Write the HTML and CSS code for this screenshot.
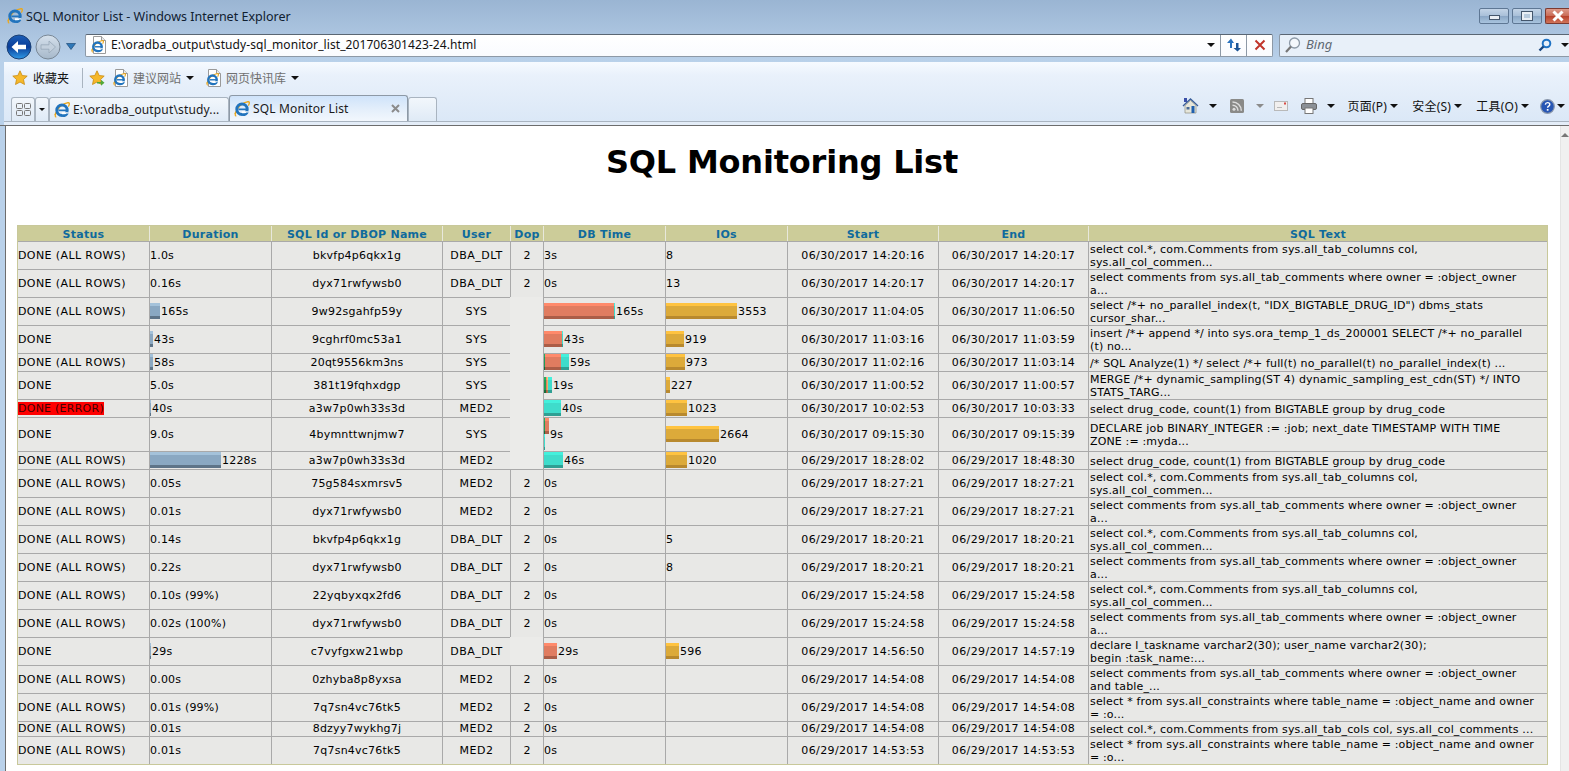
FILE: index.html
```html
<!DOCTYPE html>
<html lang="en">
<head>
    <meta charset="UTF-8">
    <title>SQL Monitor List - Windows Internet Explorer</title>
    <link rel="stylesheet" href="styles.css">
</head>
<body>
    <svg class="defs" width="0" height="0">
        <defs>
            <symbol id="ie" viewBox="0 0 16 16">
                <path d="M.9 13C3.500 6 9 1.400 14.400.6c1.500.4.9 2.600-.1 4" fill="none" stroke="#e9a820" stroke-width="1.400"/>
                <path d="M2.300 15.200c-1.700-.4-1.200-2.800.1-4.600" fill="none" stroke="#e9a820" stroke-width="1.300"/>
                <circle cx="8" cy="8.300" r="5.200" fill="none" stroke="#2274bd" stroke-width="3"/>
                <rect x="4.500" y="7.500" width="8" height="1.700" fill="#2274bd"/>
                <path d="M8 10.300h5.500L15 11l-1 1.200H8z" fill="#fff"/>
                <path d="M8.500 13.200c1.800 0 3-.5 3.800-1.700h2.400c-1.100 2.500-3.200 3.600-6 3.600z" fill="#2274bd"/>
            </symbol>
            <symbol id="page-ie" viewBox="0 0 16 18">
                <path d="M2.500.5h8l4 4v13h-12z" fill="#fff" stroke="#9a9a9a"/>
                <path d="M10.500.5v4h4" fill="#e8e8e8" stroke="#9a9a9a"/>
                <use href="#ie" x="0" y="4" width="13" height="13"/>
            </symbol>
            <symbol id="star" viewBox="0 0 16 16">
                <path d="M8 .8l2.200 4.700 5 .6-3.700 3.400 1 5-4.500-2.500-4.500 2.500 1-5L.8 6.100l5-.6z" fill="#f5b82a" stroke="#c98a12" stroke-width=".8"/>
            </symbol>
        </defs>
    </svg>

    <header class="chrome">
        <div class="title-bar">
            <svg class="ico-16"><use href="#ie"/></svg>
            <span class="title-text">SQL Monitor List - Windows Internet Explorer</span>
            <div class="win-btns">
                <span class="win-btn"><i class="glyph-min"></i></span>
                <span class="win-btn"><i class="glyph-max"></i></span>
                <span class="win-btn win-close">
                    <svg width="14" height="12" viewBox="0 0 14 12"><path d="M2.500 1.500l9 9M11.500 1.500l-9 9" stroke="#fff" stroke-width="3"/></svg>
                </span>
            </div>
        </div>

        <div class="nav-bar">
            <div class="nav-round">
                <svg width="26" height="26" viewBox="0 0 26 26">
                    <defs><linearGradient id="back" x1="0" y1="0" x2="0" y2="1"><stop offset="0" stop-color="#1c5fb8"/><stop offset=".5" stop-color="#0a3d98"/><stop offset="1" stop-color="#2f9be8"/></linearGradient></defs>
                    <circle cx="13" cy="13" r="12" fill="url(#back)" stroke="#1b3f73"/>
                    <path d="M5.500 13l6.500-6v3.800h8v4.400h-8V19z" fill="#fff"/>
                </svg>
                <svg class="nav-fwd" width="26" height="26" viewBox="0 0 26 26">
                    <defs><linearGradient id="fwd" x1="0" y1="0" x2="0" y2="1"><stop offset="0" stop-color="#d6e1ec"/><stop offset="1" stop-color="#a6b8ca"/></linearGradient></defs>
                    <circle cx="13" cy="13" r="12" fill="url(#fwd)" stroke="#7a8896"/>
                    <path d="M20.500 13l-6.500-6v3.800H6v4.400h8V19z" fill="#c3d0dd" stroke="#97a7b7" stroke-width=".8"/>
                </svg>
                <svg class="nav-drop" width="10" height="7" viewBox="0 0 10 7"><path d="M.5.5h9L5 6.500z" fill="#2f78b8" stroke="#123e6a" stroke-width=".6"/></svg>
            </div>
            <div class="addr-box">
                <svg class="ico-page"><use href="#page-ie"/></svg>
                <span class="addr-text">E:\oradba_output\study-sql_monitor_list_201706301423-24.html</span>
                <i class="arrow addr-drop"></i>
                <span class="addr-btn">
                    <svg width="15" height="14" viewBox="0 0 15 14"><path d="M4 10V5H1L5 .5 8 5H6v5z" fill="#2a72bd"/><path d="M10 5v5H7.500l4 3.500L15 10h-2.500V5z" fill="#1c5596"/></svg>
                </span>
                <span class="addr-btn">
                    <svg width="12" height="12" viewBox="0 0 12 12"><path d="M1.500 1.500l9 9M10.500 1.500l-9 9" stroke="#c0352b" stroke-width="2"/></svg>
                </span>
            </div>
            <div class="search-box">
                <svg width="18" height="18" viewBox="0 0 18 18"><circle cx="10.500" cy="7" r="5" fill="#f4f8fc" stroke="#8d9aa8" stroke-width="1.300"/><path d="M7 10.500l-5 5.500" stroke="#777" stroke-width="2.200"/></svg>
                <span class="search-text">Bing</span>
                <svg class="search-go" width="14" height="14" viewBox="0 0 14 14"><circle cx="8.500" cy="5.500" r="3.800" fill="none" stroke="#1f73c4" stroke-width="2"/><path d="M5.500 8.500L1.500 12.500" stroke="#17457f" stroke-width="2.400"/></svg>
                <i class="arrow"></i>
            </div>
        </div>

        <div class="fav-bar">
            <svg class="ico-16"><use href="#star"/></svg>
            <span class="fav-label">收藏夹</span>
            <span class="fav-sep"></span>
            <svg class="ico-16" viewBox="0 0 16 16">
                <use href="#star"/>
                <path d="M8 12h4V9.800l3.500 3-3.500 3V13.500H8z" fill="#52a83a"/>
            </svg>
            <svg class="ico-page fav-ico"><use href="#page-ie"/></svg>
            <span class="fav-link">建议网站</span>
            <i class="arrow fav-arrow"></i>
            <svg class="ico-page fav-ico fav-ico-2"><use href="#page-ie"/></svg>
            <span class="fav-link">网页快讯库</span>
            <i class="arrow fav-arrow"></i>
        </div>

        <div class="tab-bar">
            <span class="tab tab-quick">
                <svg width="15" height="13" viewBox="0 0 15 13" fill="none" stroke="#777"><rect x=".5" y=".5" width="6" height="5" rx="1"/><rect x="8.500" y=".5" width="6" height="5" rx="1"/><rect x=".5" y="7.500" width="6" height="5" rx="1"/><rect x="8.500" y="7.500" width="6" height="5" rx="1"/></svg>
            </span>
            <span class="tab tab-list"><i class="arrow arrow-small"></i></span>
            <span class="tab tab-page">
                <svg class="ico-16"><use href="#ie"/></svg>
                <span class="tab-name">E:\oradba_output\study...</span>
            </span>
            <span class="tab tab-active">
                <svg class="ico-16"><use href="#ie"/></svg>
                <span class="tab-name">SQL Monitor List</span>
                <svg class="tab-x" width="9" height="9" viewBox="0 0 9 9"><path d="M1 1l7 7M8 1L1 8" stroke="#8b8b8b" stroke-width="2"/></svg>
            </span>
            <span class="tab tab-new"></span>

            <div class="cmd-bar">
                <svg width="17" height="16" viewBox="0 0 17 16">
                    <path d="M1 8l7.500-7L16 8" fill="#e8eef5" stroke="#3a5f9a" stroke-width="1.400"/>
                    <path d="M3 7.500V15h11V7.500L8.500 2.500z" fill="#e6e6da" stroke="#8d8d80" stroke-width=".7"/>
                    <rect x="9.500" y="8" width="3" height="7" fill="#1f5fae"/>
                    <rect x="4.500" y="9" width="3" height="2.500" fill="#4a6a94"/>
                    <rect x="2" y="0" width="3" height="4" fill="#3a4fa8"/>
                </svg>
                <i class="arrow cmd-arrow"></i>
                <svg class="cmd-rss" width="14" height="14" viewBox="0 0 14 14">
                    <rect width="14" height="14" rx="1.500" fill="#8a8a88"/>
                    <circle cx="4" cy="10.200" r="1.500" fill="#ddd"/>
                    <path d="M2.500 6.200a5.500 5.500 0 0 1 5.500 5.500M2.500 3a8.800 8.800 0 0 1 8.800 8.800" fill="none" stroke="#ddd" stroke-width="1.500"/>
                </svg>
                <i class="arrow cmd-arrow arrow-dim"></i>
                <svg class="cmd-mail" width="14" height="10" viewBox="0 0 14 10">
                    <rect x=".5" y=".5" width="13" height="9" fill="#f1efee" stroke="#b9b9b9"/>
                    <rect x="10" y="1.500" width="2" height="2" fill="#d84a45"/>
                    <path d="M3 6.500h5" stroke="#b9b9b9"/>
                </svg>
                <svg class="cmd-print" width="16" height="16" viewBox="0 0 16 16">
                    <rect x="4" y=".5" width="8" height="5" fill="#fff" stroke="#777"/>
                    <rect x=".5" y="5.500" width="15" height="6" rx="1.500" fill="#8b9096" stroke="#666"/>
                    <rect x="4" y="10" width="8" height="5.500" fill="#fff" stroke="#777"/>
                </svg>
                <i class="arrow cmd-arrow"></i>
                <span class="cmd-menu">页面(P)</span><i class="arrow cmd-arrow-tight"></i>
                <span class="cmd-menu cmd-menu-gap">安全(S)</span><i class="arrow cmd-arrow-tight"></i>
                <span class="cmd-menu cmd-menu-gap">工具(O)</span><i class="arrow cmd-arrow-tight"></i>
                <svg class="cmd-help" width="15" height="15" viewBox="0 0 15 15">
                    <circle cx="7.500" cy="7.500" r="6.800" fill="#2756b4" stroke="#8a97ab" stroke-width="1.200"/>
                    <path d="M5.300 5.600c.2-1.400 1.100-2 2.300-2 1.400 0 2.200.8 2.200 1.900 0 1.700-2.200 1.600-2.200 3.300" fill="none" stroke="#fff" stroke-width="1.400"/>
                    <rect x="6.800" y="10" width="1.700" height="1.700" fill="#fff"/>
                </svg>
                <i class="arrow cmd-arrow-end"></i>
            </div>
        </div>
        <div class="tab-rule"></div>
    </header>

    <div class="window-body">
        <div class="frame-left"></div>
        <main class="page">
            <h1 class="report-title">SQL Monitoring List</h1>
            <table class="report">
                <colgroup>
                    <col class="w-status"><col class="w-dur"><col class="w-id"><col class="w-user"><col class="w-dop"><col class="w-dbt"><col class="w-io"><col class="w-start"><col class="w-end"><col class="w-sql">
                </colgroup>
                <thead>
                    <tr><th>Status</th><th>Duration</th><th>SQL Id or DBOP Name</th><th>User</th><th>Dop</th><th>DB Time</th><th>IOs</th><th>Start</th><th>End</th><th>SQL Text</th></tr>
                </thead>
                <tbody>
                    <tr><td>DONE (ALL ROWS)</td><td>1.0s</td><td class="c">bkvfp4p6qkx1g</td><td class="c">DBA_DLT</td><td class="c">2</td><td>3s</td><td>8</td><td class="c">06/30/2017 14:20:16</td><td class="c">06/30/2017 14:20:17</td><td>select col.*, com.Comments from sys.all_tab_columns col,<br>sys.all_col_commen...</td></tr>
                    <tr><td>DONE (ALL ROWS)</td><td>0.16s</td><td class="c">dyx71rwfywsb0</td><td class="c">DBA_DLT</td><td class="c">2</td><td>0s</td><td>13</td><td class="c">06/30/2017 14:20:17</td><td class="c">06/30/2017 14:20:17</td><td>select comments from sys.all_tab_comments where owner = :object_owner<br>a...</td></tr>
                    <tr><td>DONE (ALL ROWS)</td>
                        <td><div class="cell-bar"><span class="bar b-dur" style="width:10px"></span>165s</div></td>
                        <td class="c">9w92sgahfp59y</td><td class="c">SYS</td><td class="no-dop"></td>
                        <td><div class="cell-bar"><span class="bar b-cpu" style="width:70px"></span><span class="bar b-wait" style="width:1px"></span>165s</div></td>
                        <td><div class="cell-bar"><span class="bar b-io" style="width:71px"></span>3553</div></td>
                        <td class="c">06/30/2017 11:04:05</td><td class="c">06/30/2017 11:06:50</td><td>select /*+ no_parallel_index(t, "IDX_BIGTABLE_DRUG_ID") dbms_stats<br>cursor_shar...</td></tr>
                    <tr><td>DONE</td>
                        <td><div class="cell-bar"><span class="bar b-dur" style="width:3px"></span>43s</div></td>
                        <td class="c">9cghrf0mc53a1</td><td class="c">SYS</td><td class="no-dop"></td>
                        <td><div class="cell-bar"><span class="bar b-cpu" style="width:18px"></span><span class="bar b-wait" style="width:1px"></span>43s</div></td>
                        <td><div class="cell-bar"><span class="bar b-io" style="width:18px"></span>919</div></td>
                        <td class="c">06/30/2017 11:03:16</td><td class="c">06/30/2017 11:03:59</td><td>insert /*+ append */ into sys.ora_temp_1_ds_200001 SELECT /*+ no_parallel<br>(t) no...</td></tr>
                    <tr><td>DONE (ALL ROWS)</td>
                        <td><div class="cell-bar"><span class="bar b-dur" style="width:3px"></span>58s</div></td>
                        <td class="c">20qt9556km3ns</td><td class="c">SYS</td><td class="no-dop"></td>
                        <td><div class="cell-bar"><span class="bar b-green" style="width:1px"></span><span class="bar b-cpu" style="width:16px"></span><span class="bar b-wait" style="width:8px"></span>59s</div></td>
                        <td><div class="cell-bar"><span class="bar b-io" style="width:19px"></span>973</div></td>
                        <td class="c">06/30/2017 11:02:16</td><td class="c">06/30/2017 11:03:14</td><td>/* SQL Analyze(1) */ select /*+ full(t) no_parallel(t) no_parallel_index(t) ...</td></tr>
                    <tr><td>DONE</td><td>5.0s</td><td class="c">381t19fqhxdgp</td><td class="c">SYS</td><td class="no-dop"></td>
                        <td><div class="cell-bar"><span class="bar b-green" style="width:2px"></span><span class="bar b-cpu" style="width:1px"></span><span class="bar b-orange" style="width:1px"></span><span class="bar b-wait" style="width:4px"></span>19s</div></td>
                        <td><div class="cell-bar"><span class="bar b-io" style="width:4px"></span>227</div></td>
                        <td class="c">06/30/2017 11:00:52</td><td class="c">06/30/2017 11:00:57</td><td>MERGE /*+ dynamic_sampling(ST 4) dynamic_sampling_est_cdn(ST) */ INTO<br>STATS_TARG...</td></tr>
                    <tr><td><span class="status-err">DONE (ERROR)</span></td>
                        <td><div class="cell-bar"><span class="bar b-dur" style="width:1px"></span>40s</div></td>
                        <td class="c">a3w7p0wh33s3d</td><td class="c">MED2</td><td class="no-dop"></td>
                        <td><div class="cell-bar"><span class="bar b-wait" style="width:17px"></span>40s</div></td>
                        <td><div class="cell-bar"><span class="bar b-io" style="width:21px"></span>1023</div></td>
                        <td class="c">06/30/2017 10:02:53</td><td class="c">06/30/2017 10:03:33</td><td>select drug_code, count(1) from BIGTABLE group by drug_code</td></tr>
                    <tr><td>DONE</td><td>9.0s</td><td class="c">4bymnttwnjmw7</td><td class="c">SYS</td><td class="no-dop"></td>
                        <td><div class="cell-bar"><div class="bar-stack"><div class="bar-line"><span class="bar b-green" style="width:1px"></span><span class="bar b-cpu" style="width:4px"></span></div><div class="bar-line"><span class="bar b-wait" style="width:1px"></span></div></div>9s</div></td>
                        <td><div class="cell-bar"><span class="bar b-io" style="width:53px"></span>2664</div></td>
                        <td class="c">06/30/2017 09:15:30</td><td class="c">06/30/2017 09:15:39</td><td>DECLARE job BINARY_INTEGER := :job; next_date TIMESTAMP WITH TIME<br>ZONE := :myda...</td></tr>
                    <tr><td>DONE (ALL ROWS)</td>
                        <td><div class="cell-bar"><span class="bar b-dur" style="width:71px"></span>1228s</div></td>
                        <td class="c">a3w7p0wh33s3d</td><td class="c">MED2</td><td class="no-dop"></td>
                        <td><div class="cell-bar"><span class="bar b-wait" style="width:19px"></span>46s</div></td>
                        <td><div class="cell-bar"><span class="bar b-io" style="width:21px"></span>1020</div></td>
                        <td class="c">06/29/2017 18:28:02</td><td class="c">06/29/2017 18:48:30</td><td>select drug_code, count(1) from BIGTABLE group by drug_code</td></tr>
                    <tr><td>DONE (ALL ROWS)</td><td>0.05s</td><td class="c">75g584sxmrsv5</td><td class="c">MED2</td><td class="c">2</td><td>0s</td><td></td><td class="c">06/29/2017 18:27:21</td><td class="c">06/29/2017 18:27:21</td><td>select col.*, com.Comments from sys.all_tab_columns col,<br>sys.all_col_commen...</td></tr>
                    <tr><td>DONE (ALL ROWS)</td><td>0.01s</td><td class="c">dyx71rwfywsb0</td><td class="c">MED2</td><td class="c">2</td><td>0s</td><td></td><td class="c">06/29/2017 18:27:21</td><td class="c">06/29/2017 18:27:21</td><td>select comments from sys.all_tab_comments where owner = :object_owner<br>a...</td></tr>
                    <tr><td>DONE (ALL ROWS)</td><td>0.14s</td><td class="c">bkvfp4p6qkx1g</td><td class="c">DBA_DLT</td><td class="c">2</td><td>0s</td><td>5</td><td class="c">06/29/2017 18:20:21</td><td class="c">06/29/2017 18:20:21</td><td>select col.*, com.Comments from sys.all_tab_columns col,<br>sys.all_col_commen...</td></tr>
                    <tr><td>DONE (ALL ROWS)</td><td>0.22s</td><td class="c">dyx71rwfywsb0</td><td class="c">DBA_DLT</td><td class="c">2</td><td>0s</td><td>8</td><td class="c">06/29/2017 18:20:21</td><td class="c">06/29/2017 18:20:21</td><td>select comments from sys.all_tab_comments where owner = :object_owner<br>a...</td></tr>
                    <tr><td>DONE (ALL ROWS)</td><td>0.10s (99%)</td><td class="c">22yqbyxqx2fd6</td><td class="c">DBA_DLT</td><td class="c">2</td><td>0s</td><td></td><td class="c">06/29/2017 15:24:58</td><td class="c">06/29/2017 15:24:58</td><td>select col.*, com.Comments from sys.all_tab_columns col,<br>sys.all_col_commen...</td></tr>
                    <tr><td>DONE (ALL ROWS)</td><td>0.02s (100%)</td><td class="c">dyx71rwfywsb0</td><td class="c">DBA_DLT</td><td class="c">2</td><td>0s</td><td></td><td class="c">06/29/2017 15:24:58</td><td class="c">06/29/2017 15:24:58</td><td>select comments from sys.all_tab_comments where owner = :object_owner<br>a...</td></tr>
                    <tr><td>DONE</td>
                        <td><div class="cell-bar"><span class="bar b-dur" style="width:1px"></span>29s</div></td>
                        <td class="c">c7vyfgxw21wbp</td><td class="c">DBA_DLT</td><td class="no-dop"></td>
                        <td><div class="cell-bar"><span class="bar b-cpu" style="width:13px"></span>29s</div></td>
                        <td><div class="cell-bar"><span class="bar b-io" style="width:13px"></span>596</div></td>
                        <td class="c">06/29/2017 14:56:50</td><td class="c">06/29/2017 14:57:19</td><td>declare l_taskname varchar2(30); user_name varchar2(30);<br>begin :task_name:...</td></tr>
                    <tr><td>DONE (ALL ROWS)</td><td>0.00s</td><td class="c">0zhyba8p8yxsa</td><td class="c">MED2</td><td class="c">2</td><td>0s</td><td></td><td class="c">06/29/2017 14:54:08</td><td class="c">06/29/2017 14:54:08</td><td>select comments from sys.all_tab_comments where owner = :object_owner<br>and table_...</td></tr>
                    <tr><td>DONE (ALL ROWS)</td><td>0.01s (99%)</td><td class="c">7q7sn4vc76tk5</td><td class="c">MED2</td><td class="c">2</td><td>0s</td><td></td><td class="c">06/29/2017 14:54:08</td><td class="c">06/29/2017 14:54:08</td><td>select * from sys.all_constraints where table_name = :object_name and owner<br>= :o...</td></tr>
                    <tr><td>DONE (ALL ROWS)</td><td>0.01s</td><td class="c">8dzyy7wykhg7j</td><td class="c">MED2</td><td class="c">2</td><td>0s</td><td></td><td class="c">06/29/2017 14:54:08</td><td class="c">06/29/2017 14:54:08</td><td>select col.*, com.Comments from sys.all_tab_cols col, sys.all_col_comments ...</td></tr>
                    <tr><td>DONE (ALL ROWS)</td><td>0.01s</td><td class="c">7q7sn4vc76tk5</td><td class="c">MED2</td><td class="c">2</td><td>0s</td><td></td><td class="c">06/29/2017 14:53:53</td><td class="c">06/29/2017 14:53:53</td><td>select * from sys.all_constraints where table_name = :object_name and owner<br>= :o...</td></tr>
                </tbody>
            </table>
        </main>
        <div class="scrollbar"><i class="scroll-up"></i></div>
    </div>
</body>
</html>
```

FILE: styles.css
```css
html, body {
    height: 100%;
    margin: 0;
    overflow: hidden;
}
body {
    display: flex;
    flex-direction: column;
    background: #fff;
    font-family: "Noto Sans", "Noto Sans CJK SC", sans-serif;
    font-size: 12px;
    color: #1a1a1a;
}
.defs {
    position: absolute;
}
.ico-16 {
    width: 16px;
    height: 16px;
    flex: none;
}
.ico-page {
    width: 16px;
    height: 18px;
    flex: none;
}

/* browser chrome */
.chrome {
    flex: none;
    height: 126px;
    display: flex;
    flex-direction: column;
    background: linear-gradient(#9ab5d3 0, #b9d1ea 62px);
    border-bottom: 1px solid #6d6d6d;
    box-sizing: border-box;
}
.title-bar {
    height: 31px;
    flex: none;
    display: flex;
    align-items: center;
    padding: 1px 0 0 7px;
    box-sizing: border-box;
}
.title-text {
    margin-left: 3px;
    font-size: 12.500px;
    color: #102030;
}
.win-btns {
    margin-left: auto;
    display: flex;
    gap: 3px;
}
.win-btn {
    width: 28px;
    height: 14px;
    display: flex;
    align-items: center;
    justify-content: center;
    border: 1px solid #5e7794;
    border-radius: 2px;
    background: linear-gradient(#c3d4e7 0, #a8bfd8 50%, #8aa6c5 51%, #a9c4de 100%);
}
.win-close {
    width: 23px;
    border-color: #7c3a30;
    border-right: 0;
    border-radius: 2px 0 0 2px;
    background: linear-gradient(#dd9a8a 0, #c96a55 50%, #b8412a 51%, #d0745a 100%);
}
.glyph-min {
    width: 9px;
    height: 3px;
    margin-top: 3px;
    background: #e9eef4;
    border: 1px solid #44566c;
}
.glyph-max {
    width: 6px;
    height: 4px;
    background: #b9cbdd;
    border: 2px solid #e9eef4;
    outline: 1px solid #44566c;
}
.nav-bar {
    height: 31px;
    flex: none;
    display: flex;
    align-items: center;
    padding-left: 6px;
    box-sizing: border-box;
}
.nav-round {
    width: 79px;
    flex: none;
    display: flex;
    align-items: center;
}
.nav-fwd {
    margin-left: 3px;
}
.nav-drop {
    margin-left: 5px;
}
.addr-box {
    width: 1188px;
    height: 23px;
    box-sizing: border-box;
    flex: none;
    margin-top: -3px;
    display: flex;
    align-items: center;
    padding-left: 5px;
    background: linear-gradient(#fff, #f9fbfe);
    border: 1px solid #8d99a6;
    border-top-color: #5a6673;
    border-radius: 2px;
}
.addr-text {
    margin: -2px 0 0 4px;
    font-size: 12px;
    letter-spacing: .08px;
    color: #111;
}
.addr-drop {
    margin-left: auto;
    margin-right: 5px;
}
.addr-btn {
    width: 25px;
    height: 100%;
    display: flex;
    align-items: center;
    justify-content: center;
    border-left: 1px solid #8d99a6;
}
.search-box {
    flex: 1;
    height: 23px;
    margin: -3px 0 0 6px;
    box-sizing: border-box;
    display: flex;
    align-items: center;
    padding-left: 4px;
    background: #e8f0f9;
    border: 1px solid #8d99a6;
    border-top-color: #5a6673;
    border-right: 0;
    border-radius: 2px 0 0 2px;
}
.search-text {
    margin: -2px 0 0 4px;
    font-size: 13px;
    font-style: italic;
    color: #606a74;
}
.search-go {
    margin-left: auto;
    margin-right: 9px;
}
.arrow {
    display: inline-block;
    flex: none;
    width: 0;
    height: 0;
    border-left: 4px solid transparent;
    border-right: 4px solid transparent;
    border-top: 4px solid #111;
}
.arrow-small {
    border-left-width: 3px;
    border-right-width: 3px;
    border-top-width: 3px;
}
.fav-bar {
    height: 33px;
    flex: none;
    margin: 0 0 0 4px;
    display: flex;
    align-items: center;
    padding: 0 0 1px 8px;
    box-sizing: border-box;
    background: linear-gradient(#f6faff 0, #e9f1fb 40%, #e3edf9 100%);
}
.fav-label {
    margin-left: 5px;
    font-size: 12px;
    color: #111;
}
.fav-sep {
    width: 1px;
    height: 20px;
    margin: 0 6px 0 13px;
    background: #a9b4c0;
}
.fav-ico {
    margin-left: 8px;
}
.fav-ico-2 {
    margin-left: 12px;
}
.fav-link {
    margin-left: 4px;
    color: #707070;
}
.fav-arrow {
    margin-left: 5px;
}
.tab-bar {
    flex: none;
    height: 26px;
    margin-left: 4px;
    display: flex;
    align-items: flex-end;
    padding-left: 7px;
    background: linear-gradient(#e3edf9, #dbe8f7);
}
.tab-rule {
    flex: 1;
    margin-left: 4px;
    border-top: 1px solid #a9b4c0;
    background: #e4edf8;
}
.tab {
    height: 24px;
    box-sizing: border-box;
    display: flex;
    align-items: center;
    border: 1px solid #a9b4c0;
    border-bottom: 0;
    border-radius: 3px 3px 0 0;
    background: linear-gradient(#f2f7fc, #dfeaf6);
    flex: none;
}
.tab-quick {
    width: 24px;
    justify-content: center;
}
.tab-list {
    width: 14px;
    justify-content: center;
}
.tab-page {
    width: 180px;
    padding-left: 4px;
    gap: 3px;
}
.tab-active {
    width: 179px;
    height: 26px;
    padding-left: 4px;
    gap: 3px;
    background: linear-gradient(#cfe3fa 0, #e6f0fb 60%, #f2f7fd 100%);
    border-color: #8d99a6;
}
.tab-name {
    letter-spacing: .15px;
}
.tab-x {
    margin-left: auto;
    margin-right: 7px;
}
.tab-new {
    width: 29px;
}
.cmd-bar {
    margin-left: auto;
    height: 26px;
    display: flex;
    align-items: center;
    padding-bottom: 4px;
    box-sizing: border-box;
}
.cmd-arrow {
    margin-left: 10px;
}
.cmd-rss {
    margin-left: 13px;
}
.arrow-dim {
    margin-left: 12px;
    border-top-color: #8b8b8b;
}
.cmd-mail {
    margin-left: 10px;
}
.cmd-print {
    margin-left: 13px;
}
.cmd-menu {
    margin-left: 12px;
    font-size: 12px;
    letter-spacing: .25px;
    color: #111;
    white-space: nowrap;
}
.cmd-menu-gap {
    margin-left: 14px;
}
.cmd-arrow-tight {
    margin-left: 3px;
}
.cmd-help {
    margin-left: 11px;
}
.cmd-arrow-end {
    margin: 0 4px 0 2px;
}

/* window body */
.window-body {
    flex: 1;
    min-height: 0;
    display: flex;
}
.frame-left {
    width: 5px;
    flex: none;
    background: #b9d1ea;
    border-right: 1px solid #6d6d6d;
}
.page {
    flex: 1;
    min-width: 0;
    background: #fff;
    font-family: "DejaVu Sans", Verdana, sans-serif;
}
.scrollbar {
    width: 9px;
    flex: none;
    background: #f0f0f0;
    border-left: 1px solid #e4e4e4;
    box-sizing: border-box;
    display: flex;
    justify-content: center;
    padding-top: 7px;
}
.scroll-up {
    width: 0;
    height: 0;
    border-left: 4px solid transparent;
    border-right: 4px solid transparent;
    border-bottom: 4px solid #777;
}

/* report */
.report-title {
    margin: 0;
    padding: 16px 2px 0 0;
    height: 83px;
    text-align: center;
    font-size: 32px;
    line-height: 40px;
    font-weight: bold;
    letter-spacing: -.2px;
    color: #000;
}
.report {
    width: 1531px;
    margin: 0 0 0 11px;
    table-layout: fixed;
    border-collapse: separate;
    border-spacing: 0;
    border: 1px solid #c8c89a;
    font-size: 11px;
    line-height: 13px;
    color: #000;
}
.w-status { width: 131px; }
.w-dur { width: 122px; }
.w-id { width: 171px; }
.w-user { width: 68px; }
.w-dop { width: 33px; }
.w-dbt { width: 122px; }
.w-io { width: 122px; }
.w-start { width: 151px; }
.w-end { width: 150px; }
.w-sql { width: auto; }
.report th {
    padding: 2px 0 0;
    height: 15px;
    box-sizing: border-box;
    background: #cccc99;
    color: #0f6a9d;
    font-weight: bold;
    letter-spacing: .27px;
    border-left: 1px solid #e8e8dc;
    text-align: center;
}
.report th:first-child,
.report td:first-child {
    border-left: 0;
}
.report td {
    padding: 0 0 1px;
    background: #e8e8e6;
    border-top: 1px solid #a9a9a9;
    border-left: 1px solid #a9a9a9;
    vertical-align: middle;
    white-space: nowrap;
}
.report td:nth-child(1) { letter-spacing: .4px; }
.report td:nth-child(2) { letter-spacing: .2px; }
.report td:nth-child(3) { letter-spacing: .23px; }
.report td:nth-child(4) { letter-spacing: .5px; }
.report td:nth-child(6) { letter-spacing: .2px; }
.report td:nth-child(7) { letter-spacing: .2px; }
.report td:nth-child(8) { letter-spacing: .37px; }
.report td:nth-child(9) { letter-spacing: .37px; }
.report td:nth-child(10) {
    padding: 1px 0 0 1px;
    letter-spacing: .15px;
}
.report td.c {
    text-align: center;
}
.report td.no-dop {
    background: #ebebe9;
    border-top-color: #ebebe9;
    border-left-color: #ebebe9;
}
.status-err {
    display: inline-block;
    background: #f00;
    color: #400;
    letter-spacing: .25px;
}
.cell-bar {
    display: flex;
    align-items: center;
}
.bar {
    display: block;
    flex: none;
    height: 16px;
}
.cell-bar > .bar:last-of-type {
    margin-right: 1px;
}
.bar-stack {
    margin-right: 1px;
}
.bar-line {
    display: flex;
}
.b-dur {
    background: linear-gradient(#a4c2da 0 3px, #8aa8c2 3px 13px, #5e7488 13px);
}
.b-cpu {
    background: linear-gradient(#ff8a6b 0 3px, #e07c60 3px 13px, #ab5d47 13px);
}
.b-wait {
    background: linear-gradient(#44f0dc 0 3px, #3fdccb 3px 13px, #2f9f93 13px);
}
.b-green {
    background: linear-gradient(#22b060 0 3px, #1f9c55 3px 13px, #146c3a 13px);
}
.b-orange {
    background: linear-gradient(#ffc878 0 3px, #eab268 3px 13px, #a97f48 13px);
}
.b-io {
    background: linear-gradient(#ffc340 0 3px, #dcaa3a 3px 13px, #b8892e 13px);
}
```
